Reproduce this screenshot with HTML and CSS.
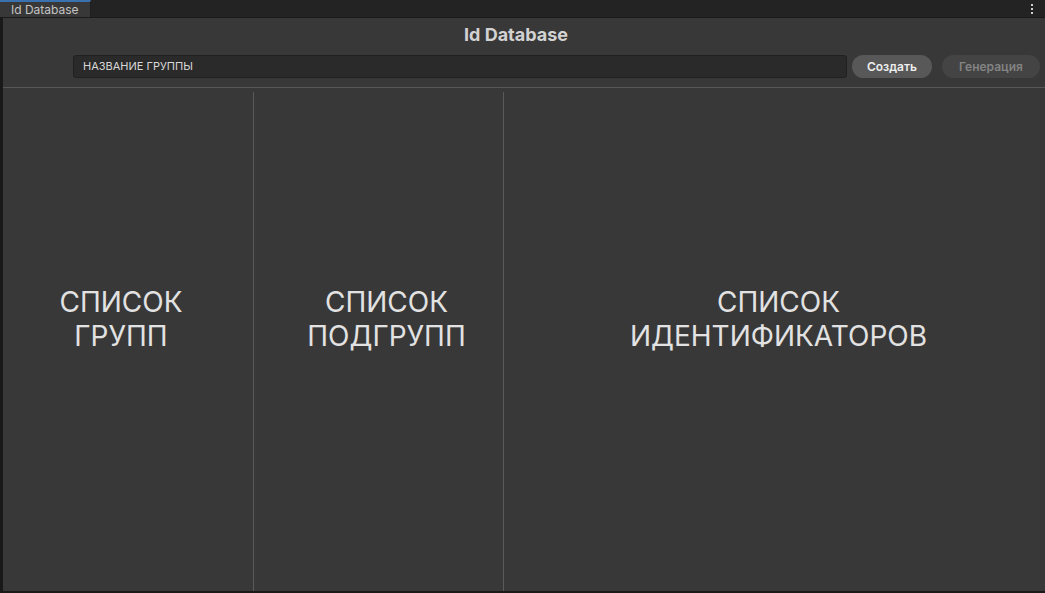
FILE: index.html
```html
<!DOCTYPE html>
<html lang="ru">
<head>
<meta charset="utf-8">
<link rel="stylesheet" href="styles.css">
</head>
<body>
<div class="window">
  <div class="tabbar">
    <div class="tab">Id Database</div>
    <div class="menu"><span></span><span></span><span></span></div>
  </div>
  <div class="main">
    <div class="header">
      <h1 class="title">Id Database</h1>
      <div class="toolbar">
        <div class="input">НАЗВАНИЕ ГРУППЫ</div>
        <button class="btn btn-primary">Создать</button>
        <button class="btn btn-disabled">Генерация</button>
      </div>
    </div>
    <div class="columns">
      <div class="col col-groups"><div class="label">СПИСОК<br>ГРУПП</div></div>
      <div class="col col-sub"><div class="label">СПИСОК<br>ПОДГРУПП</div></div>
      <div class="col col-ids"><div class="label">СПИСОК<br>ИДЕНТИФИКАТОРОВ</div></div>
    </div>
  </div>
</div>
</body>
</html>
```

FILE: styles.css
```css
* { box-sizing: border-box; }
html, body { margin: 0; padding: 0; }
body {
  width: 1045px;
  height: 593px;
  background: #191919;
  font-family: Inter, "Noto Sans", sans-serif;
  overflow: hidden;
}
.window {
  display: flex;
  flex-direction: column;
  height: 593px;
}
.tabbar {
  height: 18px;
  background: #232323;
  display: flex;
  align-items: stretch;
  justify-content: space-between;
  border-bottom: 1px solid #1a1a1a;
}
.tab {
  width: 91px;
  background: #383838;
  border-top: 2px solid #3a72b0;
  color: #c4c4c4;
  font-size: 12px;
  line-height: 15px;
  padding-left: 11px;
  border-right: 1px solid #1f1f1f;
}
.menu {
  width: 14px;
  margin-right: 6px;
  display: flex;
  flex-direction: column;
  align-items: center;
  justify-content: center;
  gap: 2px;
}
.menu span {
  width: 2px;
  height: 2px;
  background: #cfcfcf;
}
.main {
  flex: 1;
  background: #383838;
  border-left: 3px solid #191919;
  display: flex;
  flex-direction: column;
  margin-bottom: 2px;
}
.header {
  border-bottom: 1px solid #575757;
  padding-bottom: 9px;
}
.title {
  margin: 0;
  text-align: center;
  font-size: 18px;
  font-weight: 700;
  color: #d2d2d2;
  line-height: 22px;
  padding-top: 6px;
  padding-right: 16px;
  height: 37px;
}
.toolbar {
  display: flex;
  align-items: center;
  height: 23px;
  padding-left: 70px;
  padding-right: 5px;
}
.input {
  flex: 1;
  height: 23px;
  background: #2a2a2a;
  border: 1px solid #212121;
  border-radius: 3px;
  color: #d8d8d8;
  font-size: 11px;
  line-height: 21px;
  padding-left: 9px;
}
.btn {
  font-family: Inter, "Noto Sans", sans-serif;
  font-size: 12px;
  font-weight: 600;
  height: 23px;
  border: none;
  border-radius: 12px;
  padding: 0;
  line-height: 23px;
}
.btn-primary {
  width: 80px;
  margin-left: 5px;
  background: #585858;
  color: #eeeeee;
}
.btn-disabled {
  width: 98px;
  margin-left: 10px;
  background: #444444;
  color: #838383;
}
.columns {
  flex: 1;
  display: flex;
  padding-top: 4px;
}
.col {
  display: flex;
  align-items: center;
  justify-content: center;
  text-align: center;
}
.col-groups {
  width: 251px;
  padding-right: 14px;
  border-right: 1px solid #5a5a5a;
}
.col-sub {
  width: 250px;
  padding-left: 16px;
  border-right: 1px solid #5a5a5a;
}
.col-ids {
  flex: 1;
  padding-left: 8px;
}
.label {
  color: #e2e2e2;
  font-size: 28px;
  line-height: 34px;
  margin-top: -45px;
}
```
